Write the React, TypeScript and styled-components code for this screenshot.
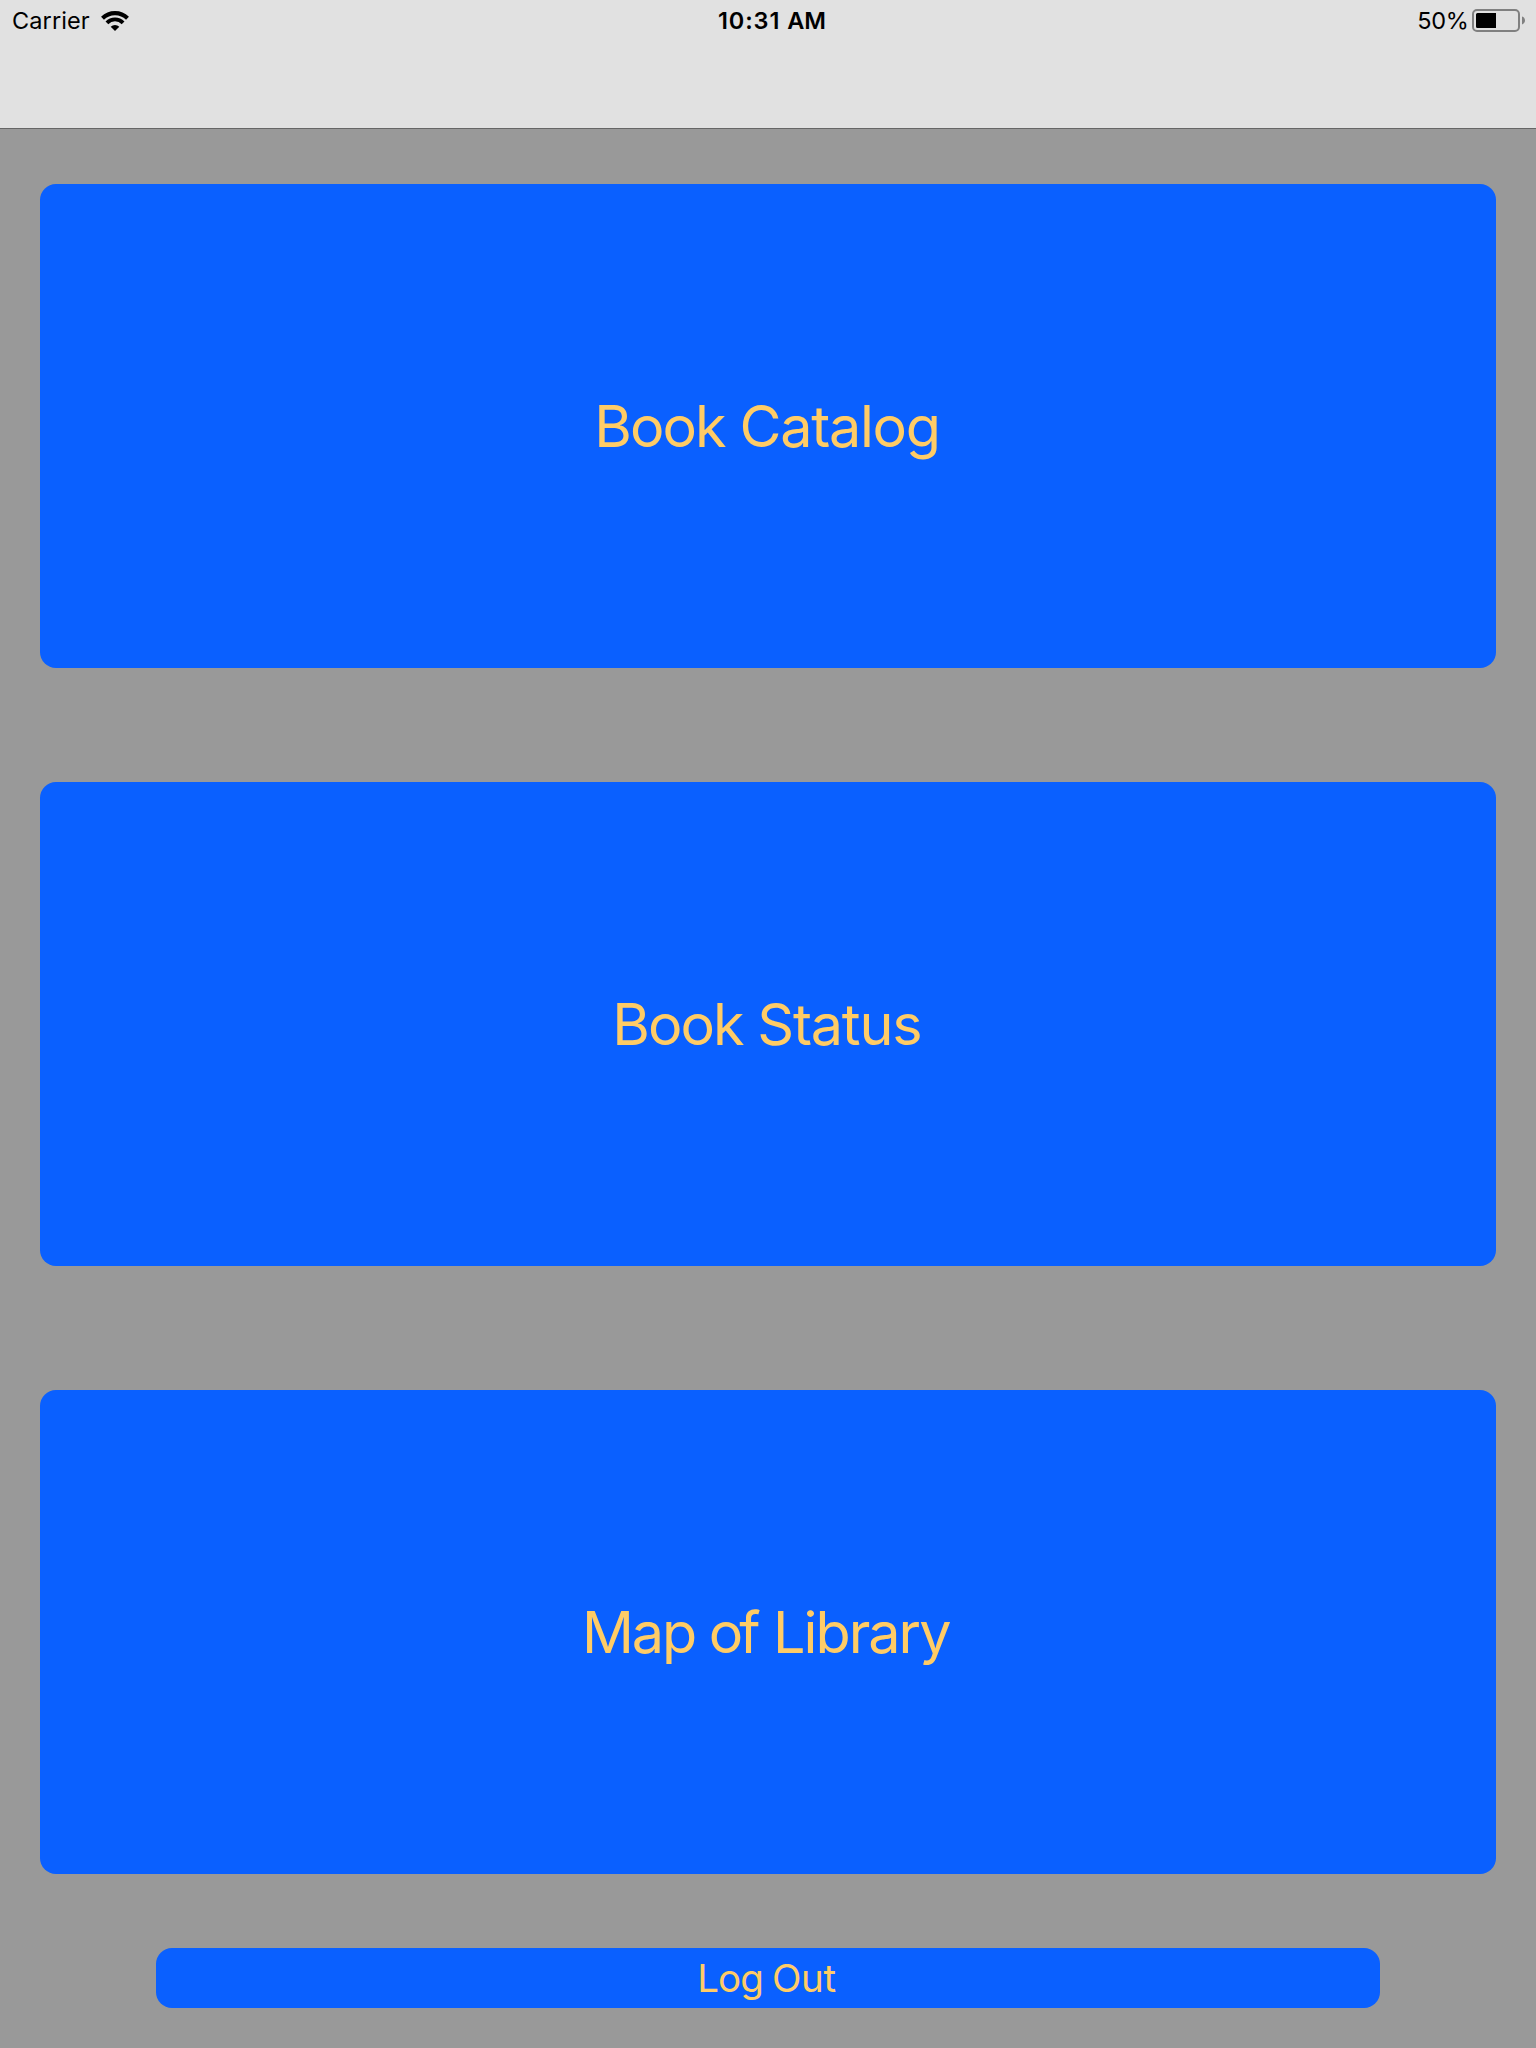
import React, { Fragment } from "react";
import styled, { createGlobalStyle } from "styled-components";

const GlobalStyle = createGlobalStyle`
  *, *::before, *::after { box-sizing: border-box; }
  body {
    margin: 0;
    background: #999999;
    font-family: Inter, "Liberation Sans", sans-serif;
  }
`;

const Screen = styled.div`
  display: flex;
  flex-direction: column;
  width: 1536px;
  height: 2048px;
  overflow: hidden;
  background: #999999;
`;

const NavigationBar = styled.header`
  height: 129px;
  background: #e1e1e1;
  border-bottom: 1px solid #666666;
`;

const StatusBar = styled.div`
  display: grid;
  grid-template-columns: 1fr auto 1fr;
  align-items: center;
  height: 41px;
  padding: 0 4px 0 12px;
  color: #000;
  font-size: 23.5px;
  line-height: 41px;
  white-space: pre;
`;

const Signal = styled.div`
  display: flex;
  align-items: center;
  gap: 11px;
  letter-spacing: 0.1px;
`;

const Clock = styled.time`
  font-weight: 600;
`;

const Power = styled.div`
  display: flex;
  align-items: center;
  justify-content: flex-end;
  gap: 3.5px;
  padding-right: 7px;
  letter-spacing: -0.3px;
`;

const Menu = styled.main`
  display: flex;
  flex-direction: column;
  padding: 55px 40px 0;
`;

const MenuButton = styled.button<{ $before?: number }>`
  height: 484px;
  margin: ${(p) => p.$before ?? 0}px 0 0;
  padding: 0;
  border: 0;
  border-radius: 16px;
  background: #0a60ff;
  color: #ffcc66;
  font-family: inherit;
  font-size: 57.5px;
  line-height: 70px;
  white-space: pre;
`;

const LogOutButton = styled(MenuButton)`
  height: 60px;
  margin: 74px 116px 0;
  font-size: 38.5px;
  line-height: 46px;
`;

const Word = styled.span<{ $tracking: number; $after?: number }>`
  letter-spacing: ${(p) => p.$tracking}px;
  margin-right: ${(p) => p.$after ?? 0}px;
`;

type WordSpec = { text: string; tracking: number; after?: number };

function Label({ words }: { words: WordSpec[] }) {
  return (
    <>
      {words.map((w, i) => (
        <Fragment key={w.text}>
          {i > 0 && " "}
          <Word $tracking={w.tracking} $after={w.after}>{w.text}</Word>
        </Fragment>
      ))}
    </>
  );
}

const sections: { before: number; words: WordSpec[] }[] = [
  {
    before: 0,
    words: [
      { text: "Book", tracking: -2, after: -1.2 },
      { text: "Catalog", tracking: -1.3, after: 2 },
    ],
  },
  {
    before: 114,
    words: [
      { text: "Book", tracking: -2, after: -1.3 },
      { text: "Status", tracking: -1.25, after: 2.4 },
    ],
  },
  {
    before: 124,
    words: [
      { text: "Map", tracking: -2.2, after: -2.4 },
      { text: "of", tracking: -4, after: 0.4 },
      { text: "Library", tracking: -2, after: 4.5 },
    ],
  },
];

function WifiIcon() {
  return (
    <svg width="28" height="20" viewBox="0 0 28 20" fill="none" aria-hidden>
      <path d="M1.5 7.3A17.7 17.7 0 0 1 26.5 7.3" stroke="#000" strokeWidth="4.1" />
      <path d="M5.9 11.8A11.4 11.4 0 0 1 22.1 11.8" stroke="#000" strokeWidth="3.9" />
      <path d="M9.7 15.7A6.1 6.1 0 0 1 18.3 15.7L14 20Z" fill="#000" />
    </svg>
  );
}

function BatteryIcon() {
  return (
    <svg width="53" height="23" viewBox="0 0 53 23" fill="none" aria-hidden>
      <rect x="1" y="1" width="46" height="21" rx="4" stroke="#808080" strokeWidth="2" />
      <path d="M5.5 4H24V19H5.5A1.5 1.5 0 0 1 4 17.5V5.5A1.5 1.5 0 0 1 5.5 4Z" fill="#000" />
      <path d="M50 7.6C52 8.2 53 9.8 53 11.5C53 13.2 52 14.8 50 15.4Z" fill="#808080" />
    </svg>
  );
}

export default function App() {
  return (
    <Screen>
      <GlobalStyle />
      <NavigationBar>
        <StatusBar>
          <Signal>
            <span>Carrier</span>
            <WifiIcon />
          </Signal>
          <Clock>
            <Label
              words={[
                { text: "10:31", tracking: 0.9, after: 1 },
                { text: "AM", tracking: 0 },
              ]}
            />
          </Clock>
          <Power>
            <span>50%</span>
            <BatteryIcon />
          </Power>
        </StatusBar>
      </NavigationBar>
      <Menu>
        {sections.map((s) => (
          <MenuButton key={s.before} $before={s.before}>
            <Label words={s.words} />
          </MenuButton>
        ))}
        <LogOutButton>
          <Label
            words={[
              { text: "Log", tracking: -0.95, after: -1.8 },
              { text: "Out", tracking: -0.35, after: 3 },
            ]}
          />
        </LogOutButton>
      </Menu>
    </Screen>
  );
}
